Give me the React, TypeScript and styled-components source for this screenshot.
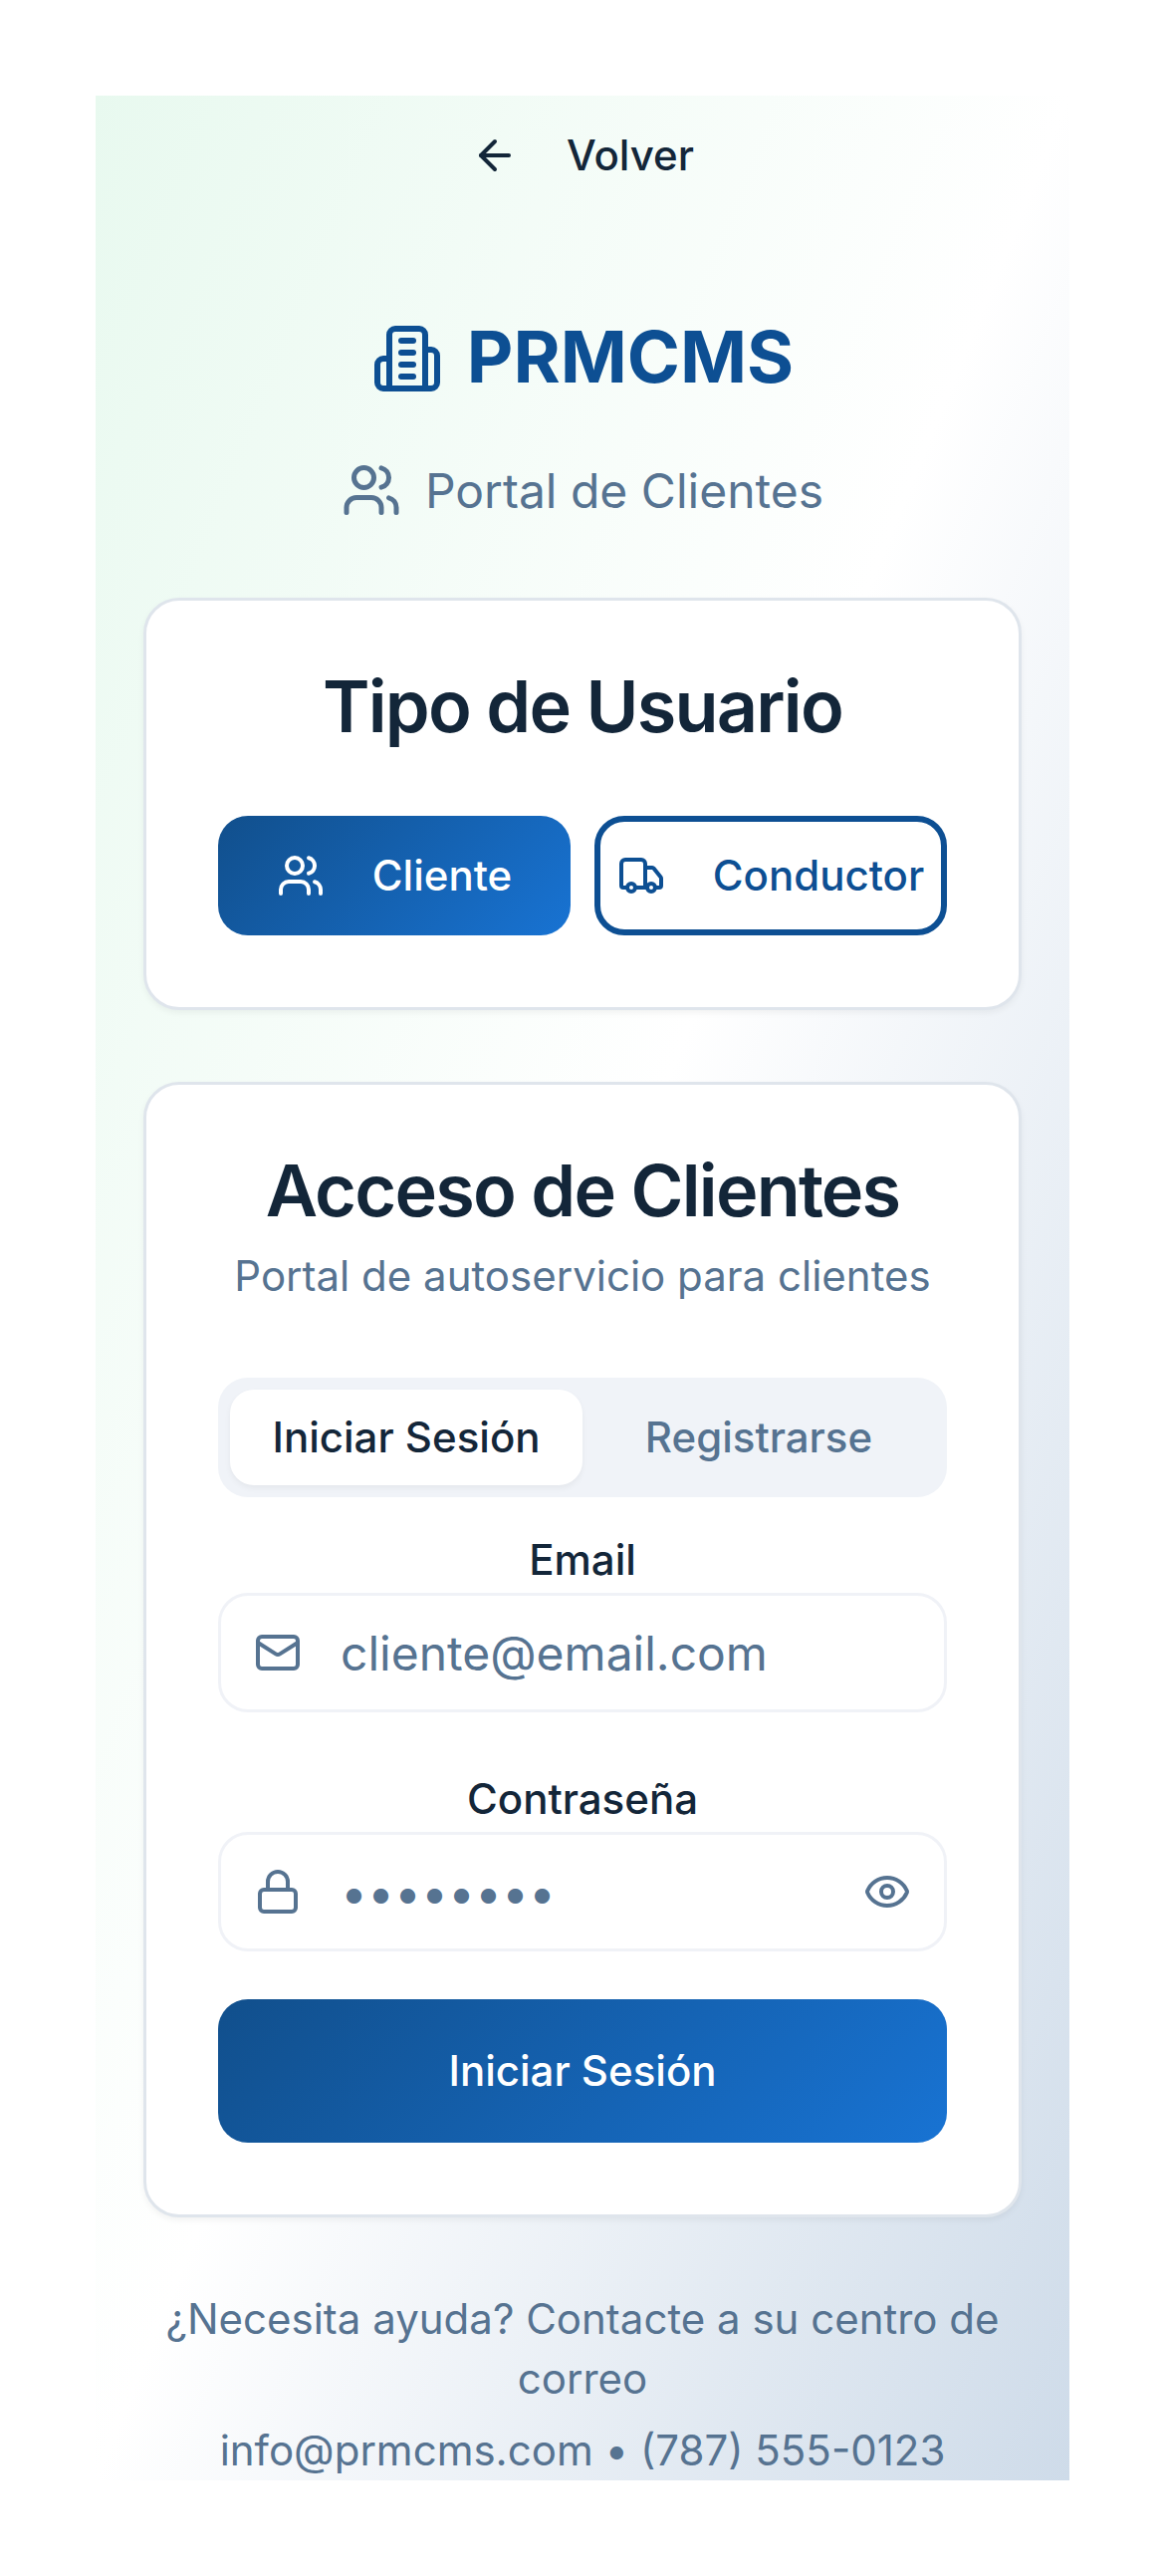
import React from "react";
import styled, { createGlobalStyle, css } from "styled-components";

const color = {
  foreground: "#132639",
  muted: "#567391",
  primary: "#0d4f93",
  border: "#dfe5ec",
  inputBorder: "#f0f2f7",
  tabs: "#f0f3f8",
};

const GlobalStyle = createGlobalStyle`
  * { box-sizing: border-box; }
  body {
    margin: 0;
    background: #fff;
    color: ${color.foreground};
    font-family: Inter, "Liberation Sans", sans-serif;
    -webkit-font-smoothing: antialiased;
  }
  h1, h2, p { margin: 0; }
  button, input { font: inherit; color: inherit; border: 0; background: none; padding: 0; margin: 0; }
`;

const Frame = styled.div`
  min-height: 2586px;
  padding: 96px;
`;

const Page = styled.main`
  display: flex;
  flex-direction: column;
  min-height: 2394px;
  padding: 0 48px;
  text-align: center;
  background: linear-gradient(to bottom right, #e8f9ef, #ffffff, #cedbe9);
`;

const buttonText = css`
  font-size: 42px;
  font-weight: 500;
  line-height: 60px;
  white-space: nowrap;
`;

const BackButton = styled.button`
  display: flex;
  align-items: center;
  justify-content: center;
  gap: 48px;
  height: 120px;
  ${buttonText}
`;

const Header = styled.header`
  display: flex;
  flex-direction: column;
  gap: 48px;
  padding: 96px 0 72px;
`;

const Brand = styled.div`
  display: flex;
  align-items: center;
  justify-content: center;
  gap: 24px;
  height: 96px;
  color: ${color.primary};
`;

const BrandName = styled.h1`
  font-size: 72px;
  font-weight: 700;
  line-height: 92px;
  padding-bottom: 4px;
`;

const Subtitle = styled.div`
  display: flex;
  align-items: center;
  justify-content: center;
  gap: 24px;
  height: 72px;
  font-size: 48px;
  color: ${color.muted};
`;

const Card = styled.section`
  padding: 72px;
  border: 3px solid ${color.border};
  border-radius: 36px;
  background: #fff;
  box-shadow: 0 3px 6px rgba(0, 0, 0, 0.05);

  & + & {
    margin-top: 72px;
  }
`;

const CardTitle = styled.h2`
  height: 72px;
  font-size: 72px;
  font-weight: 600;
  line-height: 68px;
  letter-spacing: -0.025em;
  white-space: nowrap;
`;

const CardText = styled.p`
  margin-top: 18px;
  font-size: 42px;
  line-height: 60px;
  color: ${color.muted};
`;

const UserTypes = styled.div`
  display: grid;
  grid-template-columns: 1fr 1fr;
  gap: 24px;
  margin-top: 72px;
`;

const filled = css`
  color: #fff;
  background: linear-gradient(135deg, #114f8c, #1873d3);
`;

const outlined = css`
  color: ${color.primary};
  border: 6px solid ${color.primary};
`;

const TypeButton = styled.button<{ $selected?: boolean }>`
  display: flex;
  align-items: center;
  justify-content: center;
  gap: 48px;
  min-width: 0;
  height: 120px;
  border-radius: 30px;
  ${buttonText}
  ${(p) => (p.$selected ? filled : outlined)}
`;

const Tabs = styled.div`
  display: grid;
  grid-template-columns: 1fr 1fr;
  height: 120px;
  margin-top: 72px;
  padding: 12px;
  border-radius: 30px;
  background: ${color.tabs};
`;

const Tab = styled.button<{ $active?: boolean }>`
  border-radius: 24px;
  ${buttonText}
  color: ${(p) => (p.$active ? color.foreground : color.muted)};
  background: ${(p) => (p.$active ? "#fff" : "transparent")};
  box-shadow: ${(p) => (p.$active ? "0 3px 6px rgba(0, 0, 0, 0.05)" : "none")};
`;

const Form = styled.form`
  display: flex;
  flex-direction: column;
  gap: 48px;
  margin-top: 24px;
`;

const Field = styled.div`
  display: flex;
  flex-direction: column;
`;

const Label = styled.label`
  padding-top: 6px;
  font-size: 42px;
  font-weight: 500;
  line-height: 66px;
`;

const InputBox = styled.div`
  display: flex;
  align-items: center;
  height: 120px;
  padding: 0 33px;
  border: 3px solid ${color.inputBorder};
  border-radius: 30px;
  color: ${color.muted};
`;

const Input = styled.input`
  flex: 1;
  min-width: 0;
  height: 72px;
  margin-left: 39px;
  font-size: 48px;
  outline: none;

  &::placeholder {
    color: ${color.muted};
    opacity: 1;
  }
`;

const SubmitButton = styled.button`
  height: 144px;
  border-radius: 30px;
  ${buttonText}
  ${filled}
`;

const Footer = styled.footer`
  display: flex;
  flex-direction: column;
  gap: 12px;
  padding-top: 72px;
  font-size: 42px;
  line-height: 60px;
  color: ${color.muted};
`;

const IconSvg = styled.svg`
  display: block;
  flex: none;
  fill: none;
  stroke: currentColor;
  stroke-width: 2;
  stroke-linecap: round;
  stroke-linejoin: round;
`;

type IconProps = { size?: number; children?: React.ReactNode };

const Icon = ({ size = 48, children }: IconProps) => (
  <IconSvg width={size} height={size} viewBox="0 0 24 24" aria-hidden="true">
    {children}
  </IconSvg>
);

const ArrowLeftIcon = () => (
  <Icon>
    <path d="m12 19-7-7 7-7" />
    <path d="M19 12H5" />
  </Icon>
);

const BuildingIcon = () => (
  <Icon size={72}>
    <path d="M6 22V4a2 2 0 0 1 2-2h8a2 2 0 0 1 2 2v18Z" />
    <path d="M6 12H4a2 2 0 0 0-2 2v6a2 2 0 0 0 2 2h2" />
    <path d="M18 9h2a2 2 0 0 1 2 2v9a2 2 0 0 1-2 2h-2" />
    <path d="M10 6h4" />
    <path d="M10 10h4" />
    <path d="M10 14h4" />
    <path d="M10 18h4" />
  </Icon>
);

const UsersIcon = ({ size }: IconProps) => (
  <Icon size={size}>
    <path d="M16 21v-2a4 4 0 0 0-4-4H6a4 4 0 0 0-4 4v2" />
    <circle cx="9" cy="7" r="4" />
    <path d="M22 21v-2a4 4 0 0 0-3-3.87" />
    <path d="M16 3.13a4 4 0 0 1 0 7.75" />
  </Icon>
);

const TruckIcon = () => (
  <Icon>
    <path d="M14 18V6a2 2 0 0 0-2-2H4a2 2 0 0 0-2 2v11a1 1 0 0 0 1 1h2" />
    <path d="M15 18H9" />
    <path d="M19 18h2a1 1 0 0 0 1-1v-3.65a1 1 0 0 0-.22-.624l-3.48-4.35A1 1 0 0 0 17.52 8H14" />
    <circle cx="17" cy="18" r="2" />
    <circle cx="7" cy="18" r="2" />
  </Icon>
);

const MailIcon = () => (
  <Icon>
    <rect width="20" height="16" x="2" y="4" rx="2" />
    <path d="m22 7-8.97 5.7a1.94 1.94 0 0 1-2.06 0L2 7" />
  </Icon>
);

const LockIcon = () => (
  <Icon>
    <rect width="18" height="11" x="3" y="11" rx="2" ry="2" />
    <path d="M7 11V7a5 5 0 0 1 10 0v4" />
  </Icon>
);

const EyeIcon = () => (
  <Icon>
    <path d="M2.062 12.348a1 1 0 0 1 0-.696 10.75 10.75 0 0 1 19.876 0 1 1 0 0 1 0 .696 10.75 10.75 0 0 1-19.876 0" />
    <circle cx="12" cy="12" r="3" />
  </Icon>
);

export default function App() {
  return (
    <Frame>
      <GlobalStyle />
      <Page>
        <BackButton type="button">
          <ArrowLeftIcon />
          Volver
        </BackButton>

        <Header>
          <Brand>
            <BuildingIcon />
            <BrandName>PRMCMS</BrandName>
          </Brand>
          <Subtitle>
            <UsersIcon size={60} />
            <span>Portal de Clientes</span>
          </Subtitle>
        </Header>

        <Card>
          <CardTitle>Tipo de Usuario</CardTitle>
          <UserTypes>
            <TypeButton type="button" $selected>
              <UsersIcon />
              Cliente
            </TypeButton>
            <TypeButton type="button">
              <TruckIcon />
              Conductor
            </TypeButton>
          </UserTypes>
        </Card>

        <Card>
          <CardTitle>Acceso de Clientes</CardTitle>
          <CardText>Portal de autoservicio para clientes</CardText>
          <Tabs>
            <Tab type="button" $active>Iniciar Sesión</Tab>
            <Tab type="button">Registrarse</Tab>
          </Tabs>
          <Form onSubmit={(e) => e.preventDefault()}>
            <Field>
              <Label htmlFor="email">Email</Label>
              <InputBox>
                <MailIcon />
                <Input id="email" type="email" placeholder="cliente@email.com" />
              </InputBox>
            </Field>
            <Field>
              <Label htmlFor="password">Contraseña</Label>
              <InputBox>
                <LockIcon />
                <Input id="password" type="password" placeholder="••••••••" />
                <EyeIcon />
              </InputBox>
            </Field>
            <SubmitButton type="submit">Iniciar Sesión</SubmitButton>
          </Form>
        </Card>

        <Footer>
          <p>¿Necesita ayuda? Contacte a su centro de correo</p>
          <p>info@prmcms.com • (787) 555-0123</p>
        </Footer>
      </Page>
    </Frame>
  );
}
